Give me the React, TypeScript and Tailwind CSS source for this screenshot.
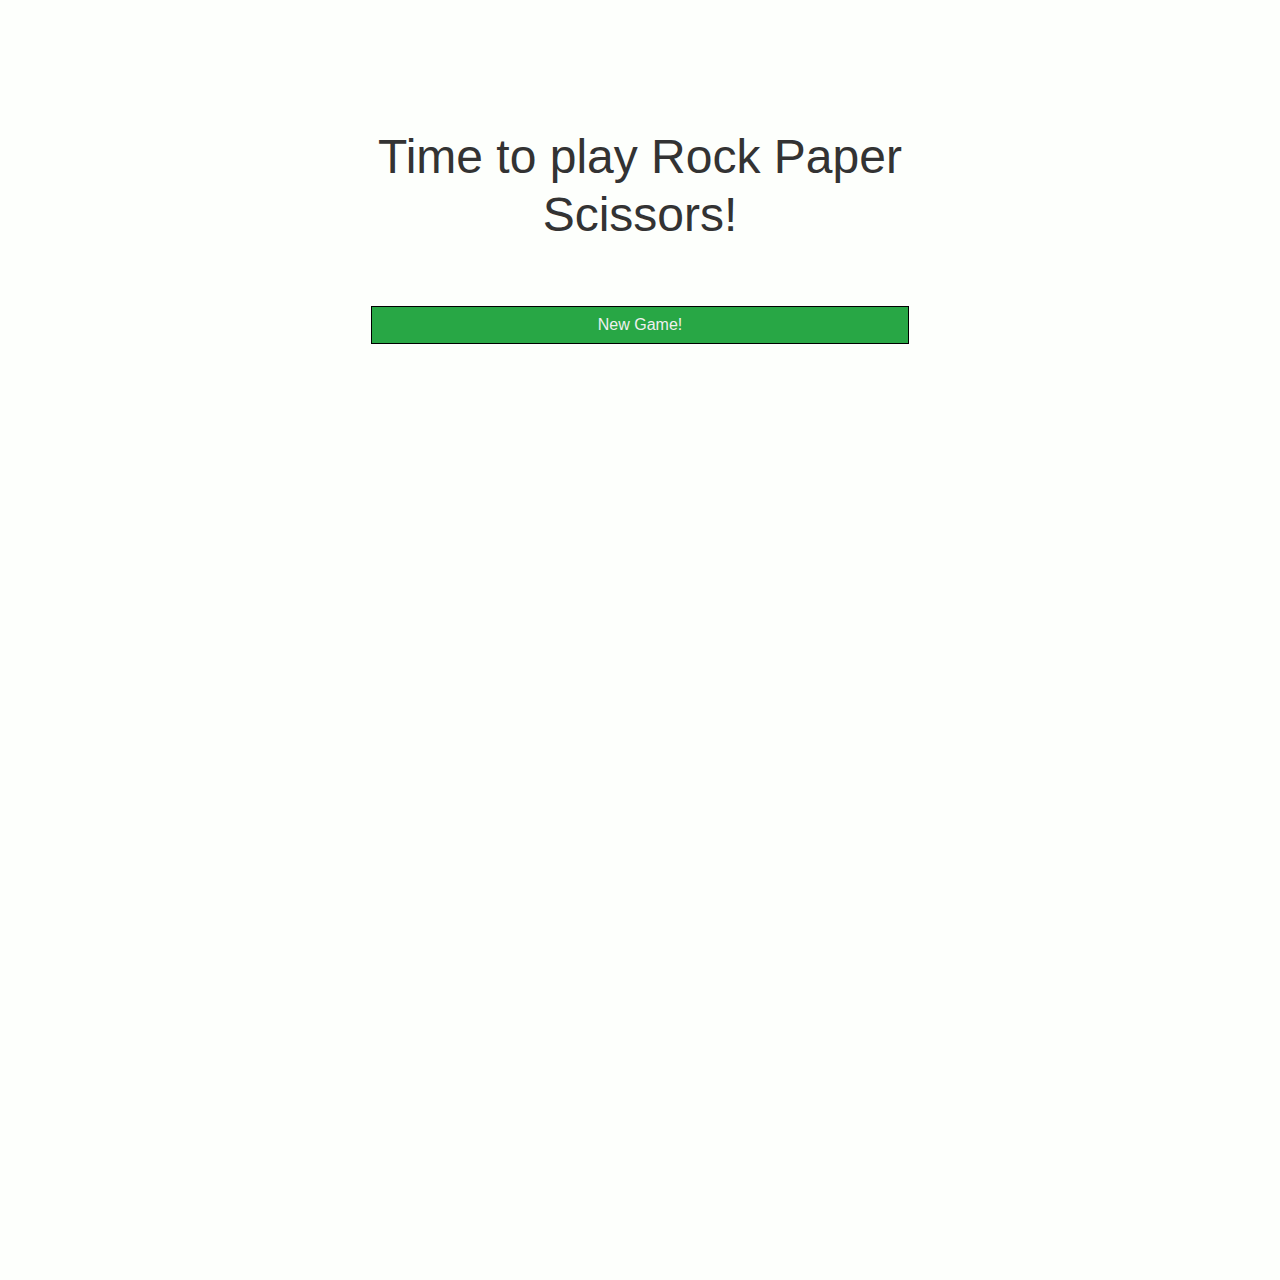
export default function App() {
  return (
    <div className="min-h-[1280px] bg-[#fdfffc] font-['Liberation_Sans',Arial,sans-serif] text-[#333333]">
      <div className="mx-auto flex w-[538px] flex-col items-center pt-[128px]">
        <h1 className="text-center text-[48px] leading-[1.2] font-normal">
          Time to play Rock Paper Scissors!
        </h1>
        <button
          type="button"
          className="mt-[63px] h-[38px] w-full border border-black bg-[#28a745] text-[16px] text-[#f0f0f0]"
        >
          New Game!
        </button>
      </div>
    </div>
  );
}
